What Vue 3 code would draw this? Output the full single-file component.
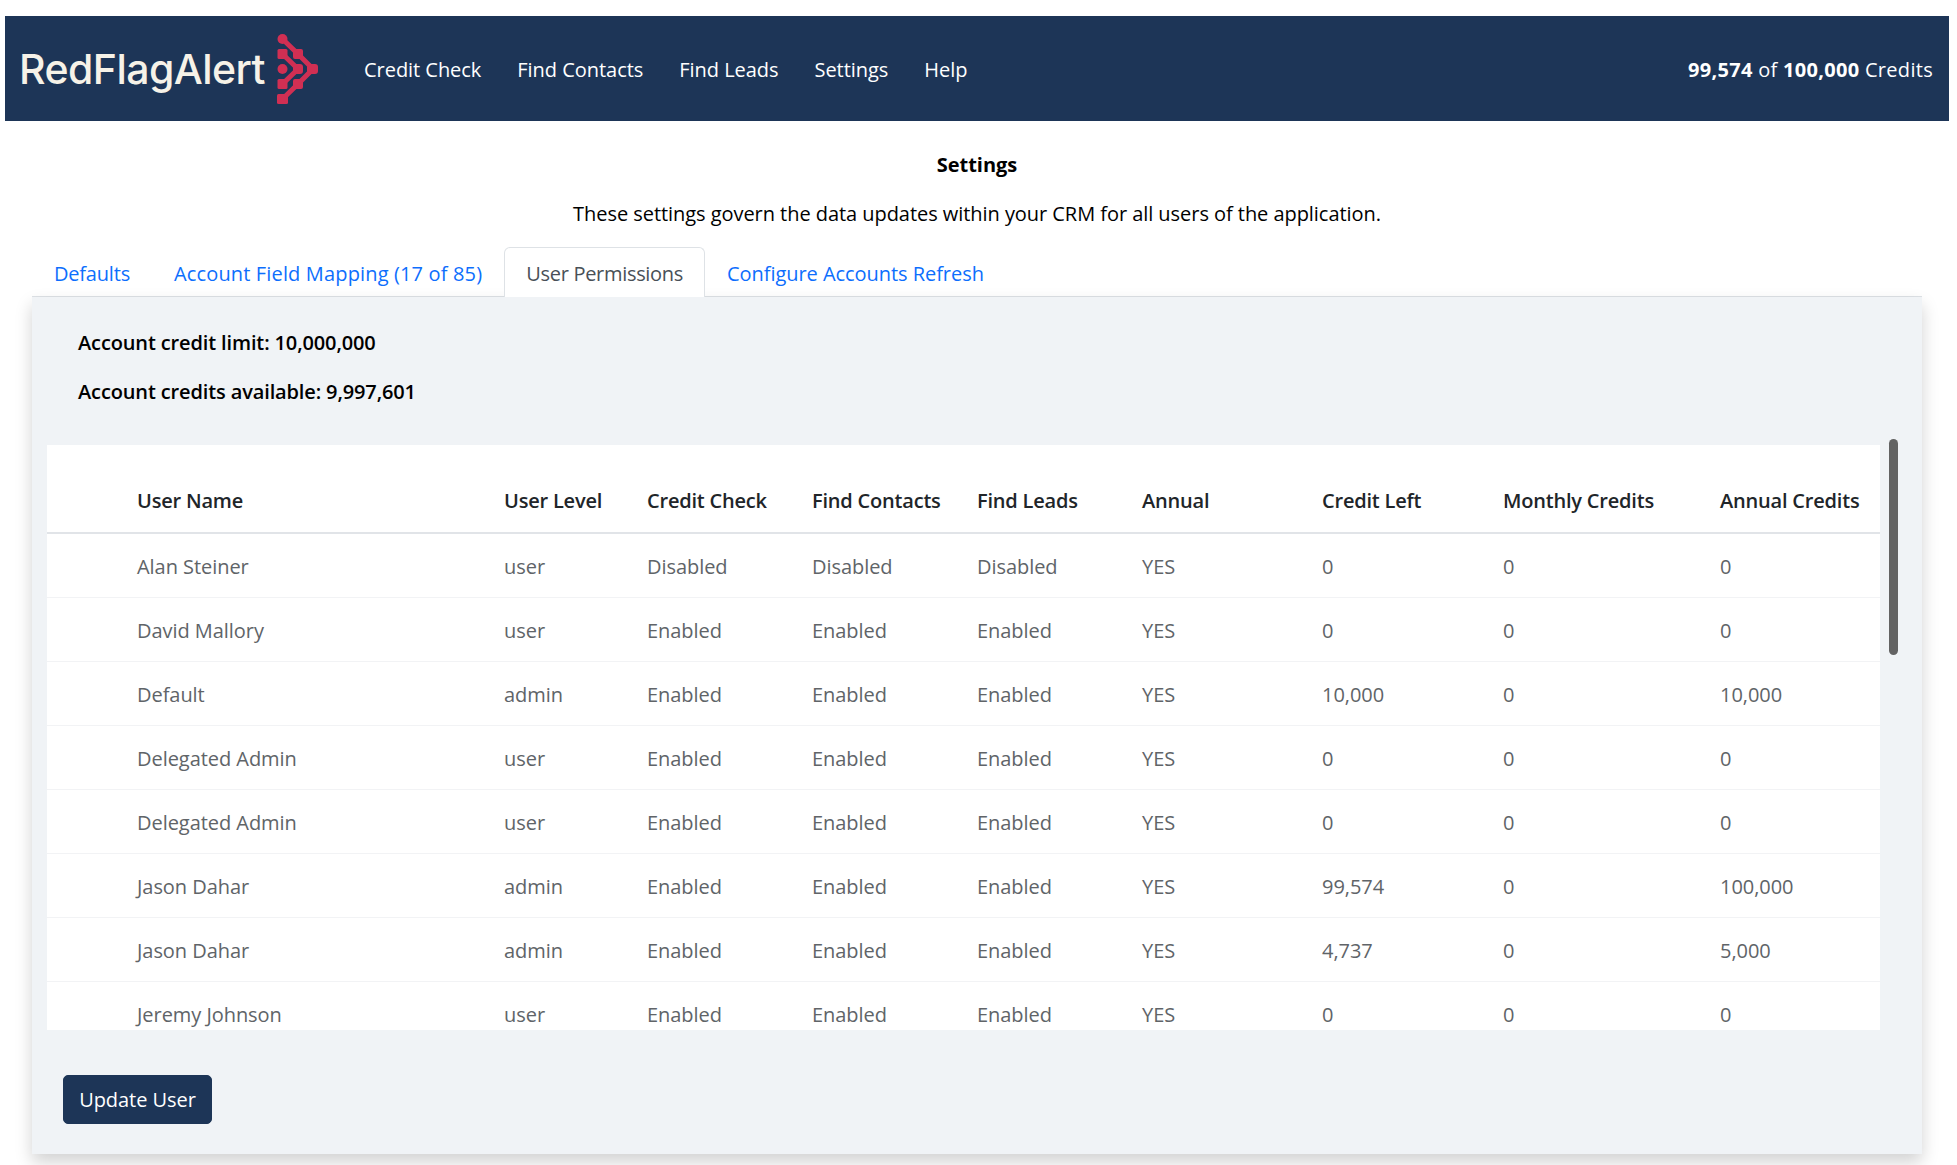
<template>
  <div class="page">
    <nav class="navbar">
      <div class="brand">
        <span class="wordmark">RedFlagAlert</span>
        <svg class="logo-mark" viewBox="0 0 46 76" width="46" height="76" aria-hidden="true">
          <g fill="none" stroke="#d12f53" stroke-width="5">
            <path d="M8.5 8 L24 23 L39 38 L24 53 L8.5 68" />
            <path d="M8.5 23 L24 38 L8.5 53" />
          </g>
          <g fill="#d12f53">
            <circle cx="8.5" cy="8" r="5" />
            <rect x="3.5" y="18" width="10" height="10" rx="1.5" />
            <rect x="19" y="18" width="10" height="10" rx="2" />
            <circle cx="8.5" cy="38" r="5" />
            <rect x="19" y="33" width="10" height="10" rx="3" />
            <rect x="33" y="33" width="11" height="10" rx="3" />
            <rect x="3.5" y="48" width="10" height="10" rx="1.5" />
            <rect x="19" y="48" width="10" height="10" rx="2" />
            <rect x="3" y="63" width="11" height="10" rx="1.5" />
          </g>
        </svg>
      </div>
      <ul class="nav-links">
        <li v-for="link in navLinks" :key="link">{{ link }}</li>
      </ul>
      <div class="credits"><strong>99,574</strong> of <strong>100,000</strong> Credits</div>
    </nav>

    <h1 class="title">Settings</h1>
    <p class="intro">These settings govern the data updates within your CRM for all users of the application.</p>

    <ul class="tabs">
      <li v-for="tab in tabs" :key="tab" class="tab" :class="{ active: tab === activeTab }">{{ tab }}</li>
    </ul>

    <section class="panel">
      <p class="account-line">Account credit limit: 10,000,000</p>
      <p class="account-line">Account credits available: 9,997,601</p>

      <div class="table-area">
        <div class="table-wrap">
          <table class="users">
            <colgroup>
              <col v-for="col in columns" :key="col.key" :style="{ width: col.width + 'px' }" />
            </colgroup>
            <thead>
              <tr>
                <th v-for="col in columns" :key="col.key">{{ col.label }}</th>
              </tr>
            </thead>
            <tbody>
              <tr v-for="(user, index) in users" :key="index">
                <td v-for="col in columns" :key="col.key">{{ user[col.key] }}</td>
              </tr>
            </tbody>
          </table>
        </div>
        <div class="scroll-thumb"></div>
      </div>

      <button type="button" class="btn-update">Update User</button>
    </section>
  </div>
</template>

<script setup>
const navLinks = ['Credit Check', 'Find Contacts', 'Find Leads', 'Settings', 'Help'];

const tabs = ['Defaults', 'Account Field Mapping (17 of 85)', 'User Permissions', 'Configure Accounts Refresh'];
const activeTab = 'User Permissions';

const columns = [
  { key: 'select', label: '', width: 90 },
  { key: 'name', label: 'User Name', width: 367 },
  { key: 'level', label: 'User Level', width: 143 },
  { key: 'check', label: 'Credit Check', width: 165 },
  { key: 'contacts', label: 'Find Contacts', width: 165 },
  { key: 'leads', label: 'Find Leads', width: 165 },
  { key: 'annual', label: 'Annual', width: 180 },
  { key: 'left', label: 'Credit Left', width: 181 },
  { key: 'monthly', label: 'Monthly Credits', width: 217 },
  { key: 'annualCredits', label: 'Annual Credits', width: 160 }
];

const makeUser = (name, level, status, left, annualCredits) => ({
  select: '',
  name,
  level,
  check: status,
  contacts: status,
  leads: status,
  annual: 'YES',
  left,
  monthly: '0',
  annualCredits
});

const users = [
  makeUser('Alan Steiner', 'user', 'Disabled', '0', '0'),
  makeUser('David Mallory', 'user', 'Enabled', '0', '0'),
  makeUser('Default', 'admin', 'Enabled', '10,000', '10,000'),
  makeUser('Delegated Admin', 'user', 'Enabled', '0', '0'),
  makeUser('Delegated Admin', 'user', 'Enabled', '0', '0'),
  makeUser('Jason Dahar', 'admin', 'Enabled', '99,574', '100,000'),
  makeUser('Jason Dahar', 'admin', 'Enabled', '4,737', '5,000'),
  makeUser('Jeremy Johnson', 'user', 'Enabled', '0', '0')
];
</script>

<style>
html,
body {
  background: #fff;
}
</style>

<style scoped>
.page {
  padding: 16px 8px 11px 5px;
  font-family: "Open Sans", "Noto Sans", sans-serif;
  font-size: 20px;
  letter-spacing: -0.05px;
  line-height: 30px;
  color: #212529;
}

.navbar {
  display: flex;
  align-items: center;
  height: 105px;
  background: #1d3557;
  color: #fff;
}

.brand {
  display: flex;
  align-items: center;
  margin-left: 14px;
  width: 345px;
}

.wordmark {
  font-family: "Inter", "Open Sans", sans-serif;
  font-size: 41px;
  font-weight: 500;
  letter-spacing: -0.55px;
  color: #f6f2e8;
}

.logo-mark {
  margin-left: 9px;
}

.nav-links {
  display: flex;
  gap: 36px;
  margin: 0;
  padding: 2px 0 0;
  list-style: none;
  flex: 1;
  letter-spacing: -0.04px;
}

.credits {
  padding: 2px 16px 0 0;
  letter-spacing: 0.3px;
}

.credits strong {
  font-weight: 700;
}

.title {
  margin: 29px 0 0;
  font-size: 20px;
  font-weight: 700;
  line-height: 30px;
  text-align: center;
  color: #000;
}

.intro {
  margin: 19px 0 0;
  text-align: center;
  color: #000;
}

.tabs {
  display: flex;
  height: 49px;
  margin: 18px 27px 0;
  padding: 0;
  list-style: none;
  border-bottom: 1px solid #dee2e6;
  box-sizing: content-box;
}

.tab {
  padding: 11px 21px 0;
  height: 50px;
  box-sizing: border-box;
  color: #0d6efd;
  border: 1px solid transparent;
  border-bottom: 0;
  border-radius: 6px 6px 0 0;
}

.tab:first-child {
  letter-spacing: -0.2px;
}

.tab:nth-child(2) {
  letter-spacing: 0.15px;
}

.tab.active {
  letter-spacing: -0.3px;
  color: #495057;
  background: #fff;
  border-color: #dee2e6;
}

.panel {
  margin: 0 27px;
  padding: 31px 15px 30px;
  background: #f0f3f6;
  box-shadow: 0 8px 16px rgba(0, 0, 0, 0.18);
}

.account-line {
  margin: 0 0 19px 31px;
  font-weight: 600;
  letter-spacing: -0.13px;
  color: #000;
}

.table-area {
  position: relative;
  margin-top: 38px;
}

.table-wrap {
  height: 585px;
  margin-right: 27px;
  overflow: hidden;
  background: #fff;
}

.users {
  width: 1833px;
  border-collapse: collapse;
  table-layout: fixed;
}

.users th {
  height: 88px;
  padding: 24px 0 0;
  box-sizing: border-box;
  font-weight: 600;
  letter-spacing: -0.2px;
  text-align: left;
  color: #212529;
  border-bottom: 2px solid #e1e4e8;
}

.users td {
  height: 64px;
  padding: 3px 0 0;
  box-sizing: border-box;
  color: #606468;
  border-bottom: 1px solid #f2f3f5;
}

.scroll-thumb {
  position: absolute;
  top: -6px;
  right: 9px;
  width: 9px;
  height: 216px;
  border-radius: 5px;
  background: #636363;
}

.btn-update {
  display: block;
  width: 149px;
  height: 49px;
  margin: 45px 0 0 16px;
  padding: 0;
  border: 1px solid #1d3557;
  border-radius: 5px;
  background: #1d3557;
  color: #fff;
  font: inherit;
  letter-spacing: inherit;
}
</style>
